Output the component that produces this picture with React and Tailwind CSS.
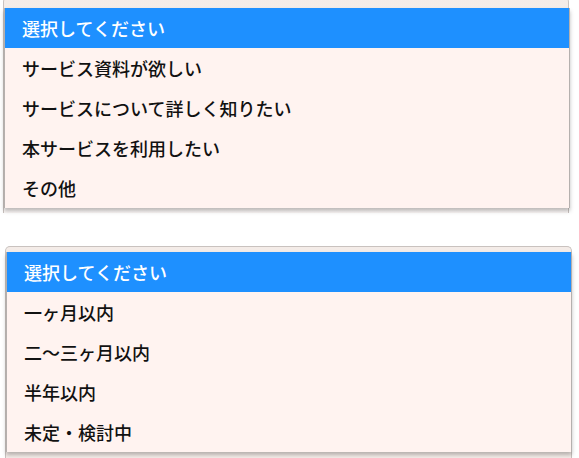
import React from 'react';

const inquiryOptions = [
  'サービス資料が欲しい',
  'サービスについて詳しく知りたい',
  '本サービスを利用したい',
  'その他',
];

const timingOptions = ['一ヶ月以内', '二〜三ヶ月以内', '半年以内', '未定・検討中'];

const font = { fontFamily: '"Noto Sans CJK JP", "Noto Sans", sans-serif' };

// an open native-looking select: the closed box sits behind, the option list lies over it
const OpenSelect = ({ options, boxClass, listClass }) => (
  <div className={`relative rounded-t-[5px] border-x border-t border-[#c9c2bf] bg-[#f4ece8] ${boxClass}`}>
    <ul
      className={`absolute z-10 border-x border-[#b5b0ae] bg-[#fff3f0] shadow-[0_3px_4px_rgba(0,0,0,0.25)] ${listClass}`}
    >
      <li className="flex h-[40px] items-center bg-[#1e90ff] pl-[17px] text-[18px] font-medium text-white">
        選択してください
      </li>
      {options.map((o) => (
        <li key={o} className="flex h-[40px] items-center pl-[17px] text-[18px] font-medium text-[#111]">
          {o}
        </li>
      ))}
    </ul>
  </div>
);

const App = () => {
  return (
    <div className="h-screen overflow-hidden bg-white" style={font}>
      <OpenSelect
        options={inquiryOptions}
        boxClass="-mt-[3px] ml-[3px] mr-[10px] h-[216px] bg-gradient-to-b from-[#f4ece8] to-[#fbf7f6]"
        listClass="left-0 right-[-2px] top-[10px]"
      />
      <OpenSelect
        options={timingOptions}
        boxClass="mt-[33px] ml-[5px] mr-[7px] h-[240px]"
        listClass="left-0 right-[-1px] top-[5px]"
      />
    </div>
  );
};

export default App;
